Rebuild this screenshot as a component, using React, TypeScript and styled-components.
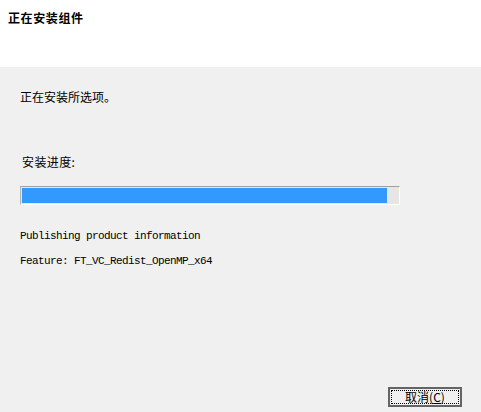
import React from "react";
import styled, { createGlobalStyle } from "styled-components";

const GlobalStyle = createGlobalStyle`
  html, body {
    margin: 0;
    padding: 0;
    height: 100%;
  }
  #root {
    height: 100%;
  }
`;

const progress = 0.97;

export default function App() {
  return (
    <>
      <GlobalStyle />
      <Window>
        <Header>
          <Title>正在安装组件</Title>
        </Header>
        <Body>
          <Message>正在安装所选项。</Message>
          <ProgressLabel>安装进度:</ProgressLabel>
          <ProgressTrack>
            <ProgressFill style={{ width: `${progress * 100}%` }} />
          </ProgressTrack>
          <Log>
            <LogLine>Publishing product information</LogLine>
            <LogLine>Feature: FT_VC_Redist_OpenMP_x64</LogLine>
          </Log>
          <Footer>
            <Button>
              <FocusRing>
                取消(<u>C</u>)
              </FocusRing>
            </Button>
          </Footer>
        </Body>
      </Window>
    </>
  );
}

const Window = styled.div`
  display: flex;
  flex-direction: column;
  height: 100vh;
  font-family: "Noto Sans CJK SC", "Liberation Sans", sans-serif;
  font-size: 12px;
  color: #000;
`;

const Header = styled.div`
  height: 67px;
  background: #fff;
  box-sizing: border-box;
  padding: 10px 0 0 8px;
`;

const Title = styled.h1`
  margin: 0;
  font-size: 12px;
  line-height: 16px;
  font-weight: bold;
  letter-spacing: 0.6px;
`;

const Body = styled.div`
  flex: 1;
  display: flex;
  flex-direction: column;
  background: #f0f0f0;
  padding: 22px 19px 5px 20px;
`;

const Message = styled.div`
  line-height: 16px;
`;

const ProgressLabel = styled.div`
  line-height: 16px;
  margin: 49px 0 0 2px;
  letter-spacing: 0.4px;
`;

const ProgressTrack = styled.div`
  width: 380px;
  height: 19px;
  margin-top: 16px;
  box-sizing: border-box;
  padding: 1px;
  background: #e6e6e6;
  border-top: 1px solid #a0a0a0;
  border-left: 1px solid #b4b4b4;
  border-right: 1px solid #fff;
  border-bottom: 1px solid #fff;
`;

const ProgressFill = styled.div`
  height: 100%;
  background: #3399ff;
`;

const Log = styled.div`
  margin-top: 19px;
  font-family: "Liberation Mono", "DejaVu Sans Mono", monospace;
  font-size: 11px;
  letter-spacing: -0.6px;
`;

const LogLine = styled.div`
  line-height: 25px;
  white-space: pre;
`;

const Footer = styled.div`
  margin-top: auto;
  display: flex;
  justify-content: flex-end;
`;

const Button = styled.button`
  width: 74px;
  height: 20px;
  padding: 1px;
  box-sizing: border-box;
  border: 2px solid #646464;
  background: #f0f0f0;
  font-family: "Noto Sans CJK SC", "Liberation Sans", sans-serif;
  font-size: 12px;
  color: #000;
  display: flex;
  cursor: pointer;
`;

const FocusRing = styled.span`
  flex: 1;
  display: flex;
  align-items: center;
  justify-content: center;
  border: 1px dotted #000;
  line-height: 12px;

  u {
    text-decoration: underline;
  }
`;
